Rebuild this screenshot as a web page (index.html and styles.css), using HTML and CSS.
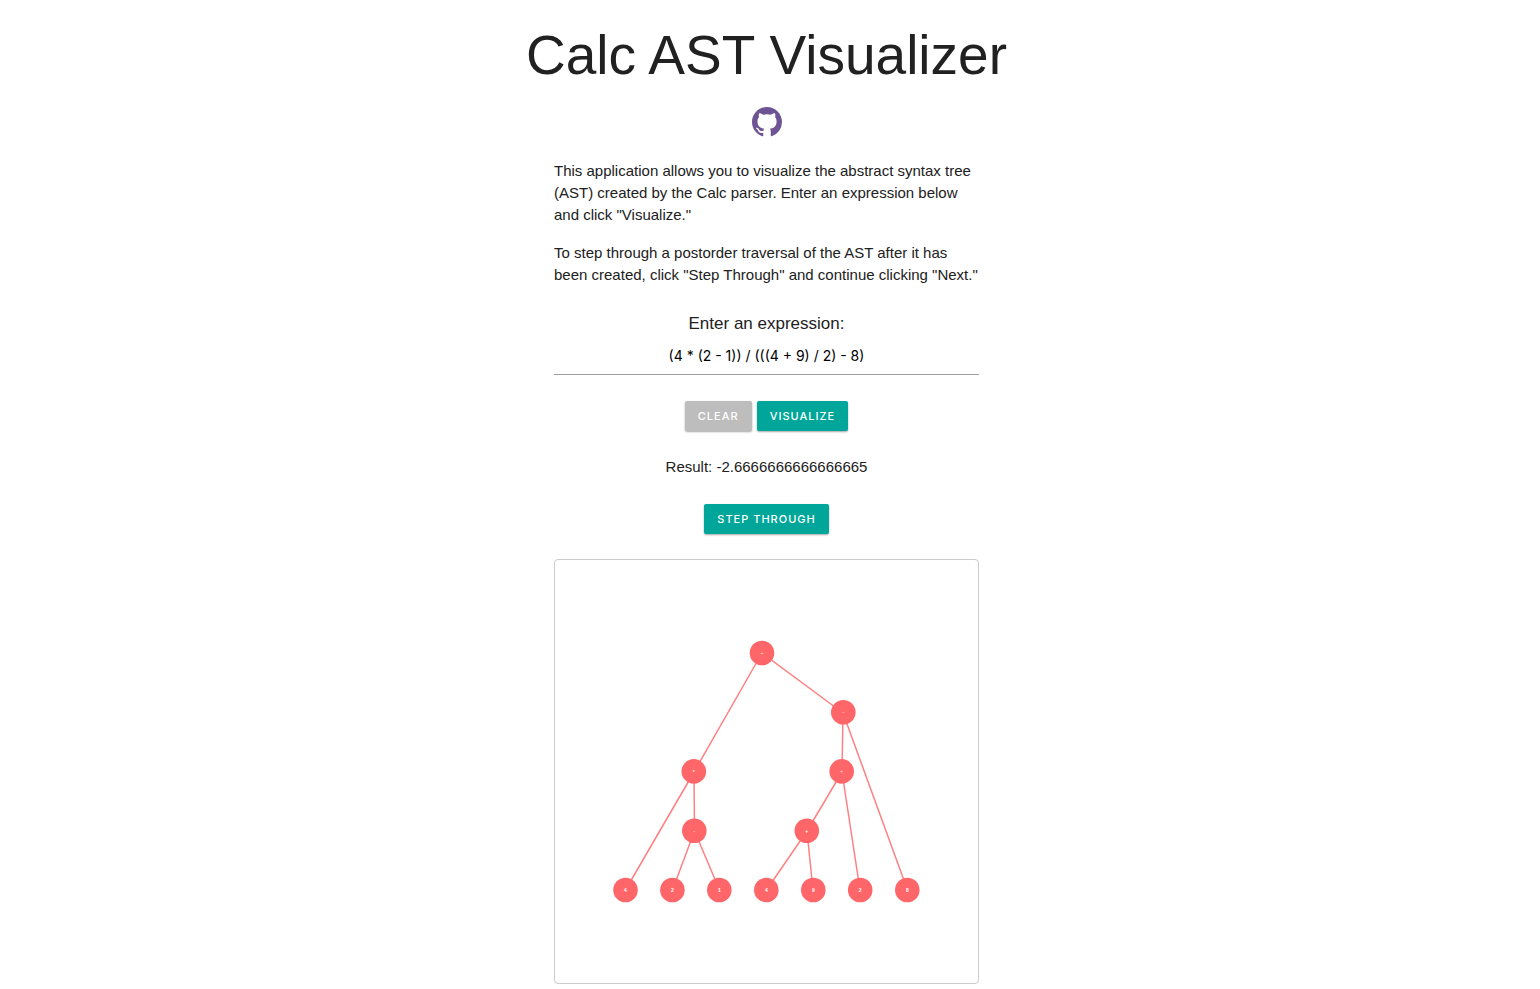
FILE: index.html
```html
<!DOCTYPE html>
<html lang="en">
<head>
<meta charset="utf-8">
<title>Calc AST Visualizer</title>
<link rel="stylesheet" href="styles.css">
</head>
<body>
<main class="page">
  <h1 class="title">Calc AST Visualizer</h1>
  <a class="repo-link" href="#" aria-label="GitHub repository">
    <svg class="repo-icon" viewBox="0 0 16 16" aria-hidden="true"><path fill-rule="evenodd" d="M8 0C3.58 0 0 3.58 0 8c0 3.54 2.29 6.53 5.47 7.59.4.07.55-.17.55-.38 0-.19-.01-.82-.01-1.49-2.01.37-2.53-.49-2.69-.94-.09-.23-.48-.94-.82-1.13-.28-.15-.68-.52-.01-.53.63-.01 1.08.58 1.23.82.72 1.21 1.87.87 2.33.66.07-.52.28-.87.51-1.07-1.78-.2-3.64-.89-3.64-3.95 0-.87.31-1.59.82-2.15-.08-.2-.36-1.02.08-2.12 0 0 .67-.21 2.2.82.64-.18 1.32-.27 2-.27s1.36.09 2 .27c1.53-1.04 2.2-.82 2.2-.82.44 1.1.16 1.92.08 2.12.51.56.82 1.27.82 2.15 0 3.07-1.87 3.75-3.65 3.95.29.25.54.73.54 1.48 0 1.07-.01 1.93-.01 2.2 0 .21.15.46.55.38A8.01 8.01 0 0 0 16 8c0-4.42-3.58-8-8-8z"/></svg>
  </a>
  <div class="content">
    <div class="intro">
      <p>This application allows you to visualize the abstract syntax tree (AST) created by the Calc parser. Enter an expression below and click "Visualize."</p>
      <p>To step through a postorder traversal of the AST after it has been created, click "Step Through" and continue clicking "Next."</p>
    </div>
    <form class="form">
      <label class="label" for="expression">Enter an expression:</label>
      <input class="field" id="expression" type="text" value="(4 * (2 - 1)) / (((4 + 9) / 2) - 8)">
      <div class="actions">
        <button class="btn btn-muted" type="button">CLEAR</button>
        <button class="btn" type="button">VISUALIZE</button>
      </div>
    </form>
    <p class="result">Result: -2.6666666666666665</p>
    <button class="btn" type="button">STEP THROUGH</button>
    <div class="canvas">
      <svg class="tree" viewBox="0 0 423 423" role="img" aria-label="Abstract syntax tree">
        <g class="edges">
          <path d="M207 93L139 212M207 93L288 153M139 212L70.500 330M139 212L139.500 271M139.500 271L117.500 330M139.500 271L164.500 330M288 153L287 212M288 153L352.500 330M287 212L252 271M287 212L305 330M252 271L211.500 330M252 271L258 330"/>
        </g>
        <g class="nodes">
          <circle cx="207" cy="93" r="12.300"/><circle cx="288.300" cy="152.200" r="12.300"/>
          <circle cx="138.800" cy="211.400" r="12.300"/><circle cx="286.700" cy="211.400" r="12.300"/>
          <circle cx="139.300" cy="270.700" r="12.300"/><circle cx="251.800" cy="270.700" r="12.300"/>
          <circle cx="70.500" cy="330" r="12.300"/><circle cx="117.400" cy="330" r="12.300"/><circle cx="164.300" cy="330" r="12.300"/><circle cx="211.300" cy="330" r="12.300"/><circle cx="258.300" cy="330" r="12.300"/><circle cx="305.200" cy="330" r="12.300"/><circle cx="352.300" cy="330" r="12.300"/>
        </g>
        <g class="values operators">
          <text x="207" y="95">÷</text><text x="288.300" y="154">-</text>
          <text x="286.700" y="213">÷</text><text x="139.300" y="273">-</text>
        </g>
        <g class="values">
          <text x="138.800" y="214">*</text><text x="251.800" y="273">+</text>
          <text x="70.500" y="332">4</text><text x="117.400" y="332">2</text><text x="164.300" y="332">1</text><text x="211.300" y="332">4</text><text x="258.300" y="332">9</text><text x="305.200" y="332">2</text><text x="352.300" y="332">8</text>
        </g>
      </svg>
    </div>
  </div>
</main>
</body>
</html>
```
FILE: styles.css
```css
* { box-sizing: border-box; }
body {
  margin: 0;
  background: #fff;
  color: #212121;
  font: 15px/22px "Liberation Sans", Arial, sans-serif;
}
.page {
  display: flex;
  flex-direction: column;
  align-items: center;
  padding: 24px 7px 5px 0;
}
.title {
  margin: 0;
  font-size: 55px;
  font-weight: 400;
  line-height: 62px;
}
.repo-link { margin-top: 21px; color: #6e5494; }
.repo-icon { display: block; width: 30px; height: 30px; fill: currentColor; }
.content {
  display: flex;
  flex-direction: column;
  align-items: center;
  width: 100%;
  max-width: 425px;
  padding-top: 23px;
}
.intro { display: grid; gap: 16px; }
.intro p { margin: 0; }
.form {
  display: flex;
  flex-direction: column;
  align-items: center;
  width: 100%;
  padding-top: 26px;
}
.label { font-size: 17px; line-height: 24px; }
.field {
  width: 100%;
  height: 38px;
  margin-top: 1px;
  padding: 0;
  border: 0;
  border-bottom: 1px solid #9e9e9e;
  outline: 0;
  background: transparent;
  color: #000;
  font: 14px Inter, sans-serif;
  text-align: center;
}
.actions { display: flex; gap: 5px; margin-top: 26px; }
.btn {
  height: 30px;
  padding: 0 13px;
  border: 0;
  border-radius: 2px;
  background: #00a699;
  box-shadow: 0 1px 2px rgba(0, 0, 0, .35);
  color: #fff;
  font: 500 11px/30px Inter, sans-serif;
  letter-spacing: 1px;
}
.btn-muted { background: #bdbdbd; }
.result { margin: 25px 0 26px; }
.canvas {
  width: 100%;
  margin-top: 25px;
  border: 1px solid #ccc;
  border-radius: 4px;
}
.tree { display: block; width: 100%; }
.edges { fill: none; stroke: #ff8082; stroke-width: 1.5; }
.nodes { fill: #ff6669; }
.values {
  fill: #fff;
  font: 700 5px "Liberation Sans", Arial, sans-serif;
  text-anchor: middle;
}
.operators { font-weight: 400; }
```
